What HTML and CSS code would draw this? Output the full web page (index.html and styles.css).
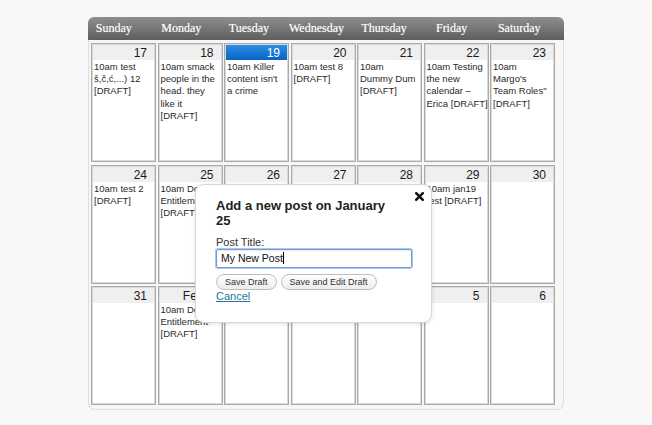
FILE: index.html
```html
<!DOCTYPE html>
<html>
<head>
<meta charset="utf-8">
<link rel="stylesheet" href="styles.css">
</head>
<body>
<div class="calendar">
  <div class="cal-head">
    <div class="head-row">
      <span>Sunday</span><span>Monday</span><span>Tuesday</span><span>Wednesday</span><span>Thursday</span><span>Friday</span><span>Saturday</span>
    </div>
  </div>
  <div class="grid">
    <div class="cell"><div class="day">17</div><div class="events">10am test<br>š,č,ć,...) 12<br>[DRAFT]</div></div>
    <div class="cell"><div class="day">18</div><div class="events">10am smack<br>people in the<br>head. they<br>like it<br>[DRAFT]</div></div>
    <div class="cell"><div class="day today">19</div><div class="events">10am Killer<br>content isn't<br>a crime</div></div>
    <div class="cell"><div class="day">20</div><div class="events">10am test 8<br>[DRAFT]</div></div>
    <div class="cell"><div class="day">21</div><div class="events">10am<br>Dummy Dum<br>[DRAFT]</div></div>
    <div class="cell"><div class="day">22</div><div class="events">10am Testing<br>the new<br>calendar –<br>Erica [DRAFT]</div></div>
    <div class="cell"><div class="day">23</div><div class="events">10am<br>Margo's<br>Team Roles"<br>[DRAFT]</div></div>

    <div class="cell"><div class="day">24</div><div class="events">10am test 2<br>[DRAFT]</div></div>
    <div class="cell"><div class="day">25</div><div class="events">10am Donor<br>Entitlement<br>[DRAFT]</div></div>
    <div class="cell"><div class="day">26</div></div>
    <div class="cell"><div class="day">27</div></div>
    <div class="cell"><div class="day">28</div></div>
    <div class="cell"><div class="day">29</div><div class="events">10am jan19<br>test [DRAFT]</div></div>
    <div class="cell"><div class="day">30</div></div>

    <div class="cell"><div class="day">31</div></div>
    <div class="cell"><div class="day">Feb 1</div><div class="events">10am Donor<br>Entitlement<br>[DRAFT]</div></div>
    <div class="cell"><div class="day">2</div></div>
    <div class="cell"><div class="day">3</div></div>
    <div class="cell"><div class="day">4</div></div>
    <div class="cell"><div class="day">5</div></div>
    <div class="cell"><div class="day">6</div></div>
  </div>
</div>

<div class="popup">
  <a class="close" href="#" aria-label="Close">
    <svg width="9" height="9" viewBox="0 0 9 9"><path d="M1.2 1.2 L7.8 7.8 M7.8 1.2 L1.2 7.8" stroke="#111" stroke-width="2.4" stroke-linecap="square"/></svg>
  </a>
  <h2 class="pop-title">Add a new post on January 25</h2>
  <label class="pop-label">Post Title:</label>
  <div class="pop-input">My New Post<span class="caret"></span></div>
  <div class="pop-buttons">
    <button class="btn">Save Draft</button>
    <button class="btn">Save and Edit Draft</button>
  </div>
  <a class="cancel" href="#">Cancel</a>
</div>
</body>
</html>
```

FILE: styles.css
```css
html, body {
  margin: 0;
  padding: 0;
  background: #f8f8f8;
}
body {
  width: 652px;
  height: 425px;
  overflow: hidden;
  position: relative;
  font-family: "Liberation Sans", Arial, sans-serif;
}
.calendar {
  margin: 17px 0 0 88px;
  width: 474px;
  height: 392px;
  border: 1px solid #dedede;
  border-top: none;
  border-radius: 7px;
  background: #f7f7f7;
}
.cal-head {
  height: 23px;
  border-radius: 6px 6px 0 0;
  background: linear-gradient(#8e8e8e, #5e5e5e);
  margin: 0 -1px;
}
.head-row {
  display: grid;
  grid-template-columns: repeat(7, 1fr);
  width: 473px;
  margin-left: -8px;
  font-family: "Liberation Serif", "Times New Roman", serif;
  font-size: 12px;
  line-height: 23px;
  color: #fff;
  text-align: center;
  text-shadow: 0 0 1px rgba(255,255,255,0.5);
}
.grid {
  display: grid;
  grid-template-columns: repeat(7, 65px);
  grid-auto-rows: 119px;
  column-gap: 1.5px;
  row-gap: 2.5px;
  padding: 3px 0 0 2px;
}
.cell {
  background: #fff;
  border: 1px solid #aaaaaa;
  box-shadow: inset 1px 1px 0 #dadada, inset -1px -1px 0 #dadada;
  overflow: hidden;
  white-space: nowrap;
}
.day {
  height: 15px;
  margin: 1px 1px 0 1px;
  background: #efefef;
  text-align: right;
  padding-right: 7px;
  font-size: 12px;
  line-height: 16px;
  color: #1a1a1a;
}
.day.today {
  background: linear-gradient(#2b90e4, #0862c6);
  color: #fff;
}
.events {
  padding: 1px 2px 0 2px;
  font-size: 9.5px;
  line-height: 12.2px;
  color: #2a2a2a;
}

.popup {
  position: absolute;
  left: 195px;
  top: 184px;
  width: 237px;
  height: 139px;
  box-sizing: border-box;
  background: #fff;
  border: 1px solid #d8d8d8;
  border-radius: 9px;
  box-shadow: 0 1px 4px rgba(0,0,0,0.12);
  padding: 13px 20px 0 20px;
}
.close {
  position: absolute;
  right: 7px;
  top: 7px;
  display: block;
  width: 9px;
  height: 9px;
}
.close svg { display: block; }
.pop-title {
  margin: 0;
  padding-right: 22px;
  font-size: 13px;
  line-height: 15px;
  font-weight: bold;
  color: #222;
}
.pop-label {
  display: block;
  margin-top: 7px;
  font-size: 11px;
  line-height: 14px;
  color: #333;
}
.pop-input {
  width: 196px;
  height: 19px;
  box-sizing: border-box;
  border: 1px solid #6d9fd6;
  box-shadow: 0 0 0 1px #a9c8ec, inset 0 1px 1px rgba(0,0,0,0.08);
  border-radius: 2px;
  padding: 0 4px;
  font-size: 10.5px;
  line-height: 17px;
  color: #111;
}
.caret {
  display: inline-block;
  width: 1px;
  height: 12px;
  background: #000;
  vertical-align: -2px;
}
.pop-buttons {
  display: flex;
  gap: 4px;
  margin-top: 6px;
}
.btn {
  height: 16px;
  padding: 0 8px;
  border: 1px solid #bdbdbd;
  border-radius: 8px;
  background: linear-gradient(#ffffff, #ececec);
  font-family: "Liberation Sans", Arial, sans-serif;
  font-size: 9px;
  line-height: 14px;
  color: #333;
}
.cancel {
  display: block;
  width: max-content;
  font-size: 11px;
  line-height: 13px;
  color: #21759b;
  text-decoration: underline;
}
```
